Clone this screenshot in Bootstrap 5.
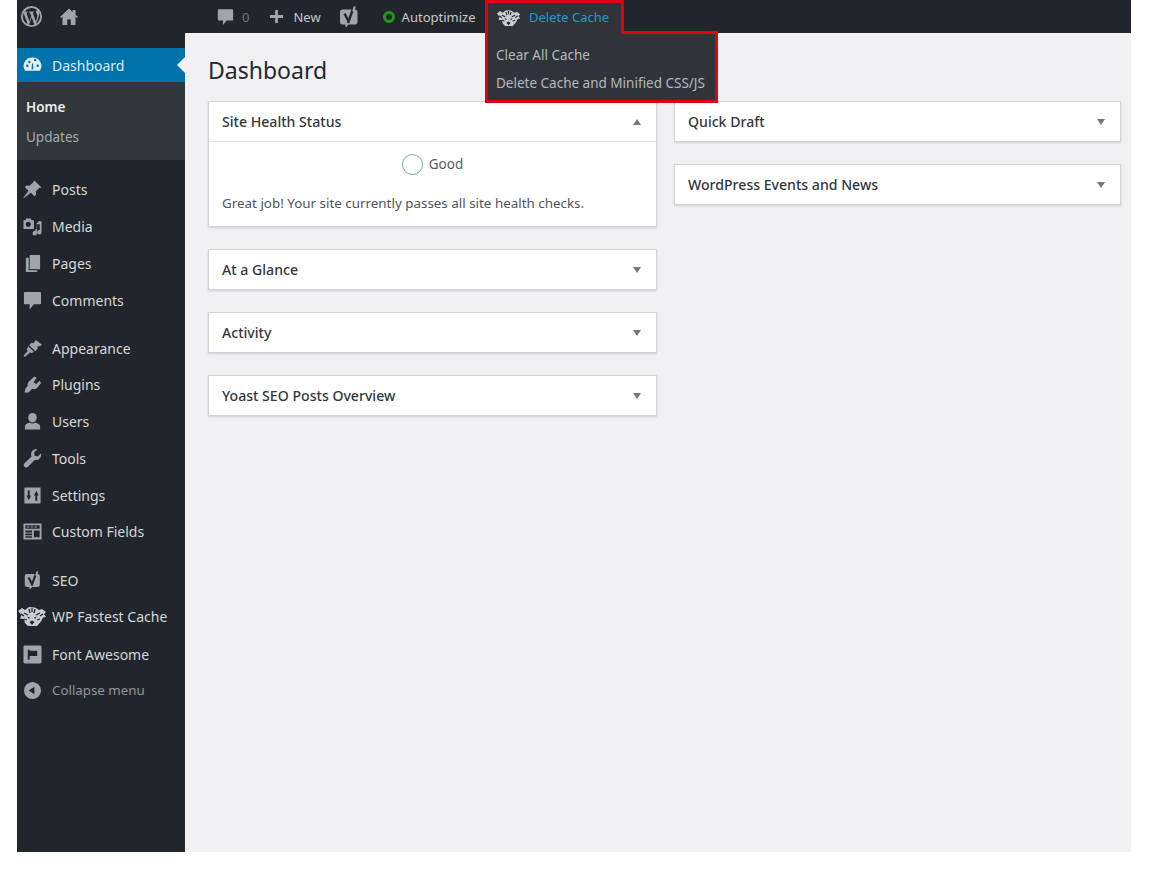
<!doctype html>
<html lang="en"><head><meta charset="utf-8"><title>Dashboard</title>
<link rel="stylesheet" href="https://cdn.jsdelivr.net/npm/bootstrap@5.3.0/dist/css/bootstrap.min.css">
<style>
html,body{background:#fff;margin:0;height:871px;overflow:hidden}
body{font-family:"Noto Sans","Open Sans",sans-serif;font-size:14px;color:#444}
.wpshell{width:1114px;height:852px;margin-left:17px;background:#f1f0f3;position:relative;flex-direction:column}
.topbar{height:33px;background:#22262c;color:#c6c8ca;flex:none}
.topbar svg{fill:#a0a5aa;display:block;flex:none}
.tb-logo{margin-left:3px}
.tb-home{margin-left:16px}
.tb-comment{margin-left:138px}
.tb-plus{margin-left:20px}
.tb-new{margin-left:9px}
.tb-yoast{margin-left:18px}
.tb-auto{margin-left:7px}
.tb-item{height:33px;font-size:13px;white-space:nowrap;padding-top:2px}
.tb-muted{color:#72777c}
.dotgreen{width:12px;height:12px;border-radius:50%;border:3px solid #1f9a18;display:block;margin-left:24px;margin-top:1px}
.cachemenu{position:absolute;left:468px;top:0;width:233px;height:103px;z-index:5;pointer-events:none}
.cachemenu>svg{position:absolute;inset:0}
.cache-title{position:absolute;left:11px;top:8px;height:20px;gap:8px;font-size:13px;color:#1d9cc6;white-space:nowrap}
.cache-links{position:absolute;left:11px;top:41px;font-size:13.5px;color:#b4b9be;line-height:28px;white-space:nowrap}
.sidebar{width:168px;background:#22262c;flex:none;padding-top:15px}
.mrow{height:37px;color:#d5d7d9;font-size:14px;padding-left:6px;gap:10px;white-space:nowrap}
.mrow>svg{width:19px;height:19px;fill:#a0a5aa;flex:none}
.mactive{height:34px;background:#0073aa;color:#dcecf4;position:relative}
.mactive>svg{fill:#e5edf2}
.mactive::after{content:"";position:absolute;right:0;top:9px;border:8px solid transparent;border-right-color:#f1f0f3;border-left-width:0}
.subm{background:#32373c;height:78px;padding:10px 9px 0;font-size:13.5px;line-height:30px;color:#a6aaae;margin-bottom:11px}
.subm b{color:#eceeef;font-weight:600;display:block;font-size:13.5px}
.sep{margin-top:11px}
.sep2{margin-top:12px}
.up1{margin-top:-1px}
.dn1{margin-top:1px}
.mrow>svg.tigerside{width:30px;height:22px;margin-left:-6px;margin-right:-5px}
.mcollapse{color:#92969a;font-size:13.3px}
.mainpane{padding:0 10px 0 23px;min-width:0}
.pagehead{font-family:"Noto Sans",sans-serif;font-size:23px;color:#23282d;line-height:30px;margin:22px 0 16px;font-weight:400}
.boxcols{gap:17px}
.colleft{width:449px;flex:none}
.colright{width:447px;flex:none}
.wpbox{background:#fff;border:1px solid #d3d4d8;box-shadow:0 1px 2px rgba(0,0,0,.14);margin-bottom:22px}
.wpbox-h{height:39px;padding:0 13px;font-size:14.1px;font-weight:500;color:#32373c}
.wpbox-h.opened{height:40px;border-bottom:1px solid #e2e4e7}
.tri{width:0;height:0;border-left:4px solid transparent;border-right:4px solid transparent;border-top:6px solid #72777c;margin-right:2px}
.tri.up{border-top:0;border-bottom:6px solid #72777c}
.healthbody{height:84px;padding:12px 13px 0}
.healthrow{gap:6px}
.healthring{width:21px;height:21px;border-radius:50%;border:1.5px solid #6fae8c;display:block}
.healthtext{color:#555d66;font-size:13.5px}
.healthnote{margin-top:18px;font-size:13.4px;color:#50555a;white-space:nowrap}
.tiger-top{width:25px;height:19px;flex:none}
</style></head><body>
<div class="wpshell d-flex">
 <svg width="0" height="0" class="position-absolute"><defs>
  <symbol id="yoast" viewBox="0 0 20 22"><path d="M3.500 3.500H16a2.500 2.500 0 0 1 2.500 2.500V16a2.500 2.500 0 0 1-2.500 2.500H9.500L7 21.500 6 18.500H3.500A2.500 2.500 0 0 1 1 16V6a2.500 2.500 0 0 1 2.500-2.500z"/><path d="M5.500 7.500 9.300 15M14 3 9 17" fill="none" stroke="#22262c" stroke-width="2.400"/><path d="M15.800 .3 14 5.500" fill="none" stroke="#a0a5aa" stroke-width="2"/></symbol>
  <symbol id="tigerface" viewBox="0 0 30 22"><path d="M1 5 5 2l3 2 4-3 6 .5 4 2.500 3-1 4 3-2 2 2 3-3 .5-2 4-4 4.500H11L8 17l-1-4-4-.5L4.500 9z" fill="#c9cbce"/><path d="M7 7 11 9M23 7 19 9M12 3l1 4M18 3l-1 4M15 2v4M4 8l3 2M26 8l-3 2M7 13l3 1M23 13l-3 1" stroke="#22262c" stroke-width="1.300" fill="none"/><path d="M10 10.500 13 11.500 12 13zM20 10.500 17 11.500 18 13zM12.500 16 15 14.500 17.500 16 15 19z" fill="#22262c"/></symbol>
 </defs></svg>
 <div class="topbar d-flex align-items-center">
  <svg class="tb-logo" width="23" height="23" viewBox="0 0 24 24"><path fill-rule="evenodd" d="M12 1a11 11 0 1 0 0 22 11 11 0 0 0 0-22zM3 12c0-1.300.3-2.500.8-3.600l4.200 11.700A9 9 0 0 1 3 12zm9 9c-.9 0-1.700-.1-2.500-.4l2.700-7.800 2.700 7.500A9 9 0 0 1 12 21zm1.200-13.200c.5 0 1-.1 1-.1.5-.1.400-.8-.1-.8 0 0-1.400.1-2.300.1-.9 0-2.300-.1-2.300-.1-.5 0-.6.800-.1.800l.9.1 1.400 3.700-1.900 5.700-3.200-9.400c.5 0 1-.1 1-.1.5-.1.400-.8-.1-.8 0 0-1.400.1-2.300.1h-.5A9 9 0 0 1 18.100 5.400h-.1c-.9 0-1.500.8-1.500 1.600 0 .7.4 1.300.9 2.100.3.600.7 1.300.7 2.400 0 .7-.3 1.600-.7 2.800l-.9 3zm3.300 12a9 9 0 0 0 3.400-12.100c.1.400.1.800.1 1.300 0 1.300-.2 2.700-.9 4.500z"/></svg>
  <svg class="tb-home" width="20" height="20" viewBox="0 0 20 20"><path d="M10 1.500 1 10l1 1 1.500-1.300V18H8.200v-5.500h3.600V18h4.700V9.700L18 11l1-1-2.500-2.300V3h-2.800v2z"/></svg>
  <svg class="tb-comment" width="17" height="18" viewBox="0 0 20 20"><path d="M2 1h16a1 1 0 0 1 1 1v11a1 1 0 0 1-1 1h-6.500L7 19.500V14H2a1 1 0 0 1-1-1V2a1 1 0 0 1 1-1z"/></svg>
  <span class="tb-item d-flex align-items-center tb-muted ms-2">0</span>
  <svg class="tb-plus" width="15" height="15" viewBox="0 0 16 16"><path d="M6.500 1h3v5.500H15v3H9.500V15h-3V9.500H1v-3h5.500z"/></svg>
  <span class="tb-item tb-new d-flex align-items-center">New</span>
  <svg class="tb-yoast" width="20" height="22"><use href="#yoast"/></svg>
  <span class="dotgreen"></span>
  <span class="tb-item tb-auto d-flex align-items-center">Autoptimize</span>
 </div>
 <div class="d-flex flex-grow-1">
  <nav class="sidebar">
   <div class="mrow mactive d-flex align-items-center"><svg viewBox="0 0 20 20"><path fill-rule="evenodd" d="M10 1.500a9 9 0 0 0-7.800 14h15.600A9 9 0 0 0 10 1.500zM4.500 11.500a1.300 1.300 0 1 1 0-2.600 1.300 1.300 0 0 1 0 2.600zm2.200-4a1.300 1.300 0 1 1 0-2.600 1.300 1.300 0 0 1 0 2.600zM11 14H9l.5-6h1zm1.800-8.500a1.300 1.300 0 1 1 0-2.600 1.300 1.300 0 0 1 0 2.600zm2.700 6a1.300 1.300 0 1 1 0-2.600 1.300 1.300 0 0 1 0 2.600z"/></svg>Dashboard</div>
   <div class="subm"><b>Home</b>Updates</div>
   <div class="mrow d-flex align-items-center"><svg viewBox="0 0 20 20"><path d="M12 .5 19.500 8l-2.500.5-3.500 3.500.3 3.500-1.800 1.500-3.700-3.700L1 19l-.5-.5 5.300-7.300L2 7.500l1.500-1.800L7 6l3.500-3.500z"/></svg>Posts</div>
   <div class="mrow d-flex align-items-center"><svg viewBox="0 0 20 20"><path fill-rule="evenodd" d="M3 1.500h5l1 2h2.500v9H.5v-9H3zm2.500 3.500a2.700 2.700 0 1 0 0 5.400 2.700 2.700 0 0 0 0-5.400z"/><path d="M19.500 4.500V16a2.300 2.300 0 1 1-1.800-2.200V7.500h-3V17a2.300 2.300 0 1 1-1.800-2.200v-2h1.500V6h1.500V4.500z"/></svg>Media</div>
   <div class="mrow d-flex align-items-center"><svg viewBox="0 0 20 20"><path d="M7 1h11v15H7z"/><path d="M3 4h3v13h9v2H3z"/></svg>Pages</div>
   <div class="mrow d-flex align-items-center"><svg viewBox="0 0 20 20"><path d="M2 1h16a1 1 0 0 1 1 1v11a1 1 0 0 1-1 1h-6.500L7 19.500V14H2a1 1 0 0 1-1-1V2a1 1 0 0 1 1-1z"/></svg>Comments</div>
   <div class="mrow sep d-flex align-items-center"><svg viewBox="0 0 20 20"><path d="M13.500 1 20 6l-2 1.500-3 .5.500 2L13 13 6.500 6.500 9 4l2 .5zM5.500 7.500l6 6-2.500 1.500-1.500-1L2 19 .5 17.500 5 12.500l-1-1.500z"/></svg>Appearance</div>
   <div class="mrow up1 d-flex align-items-center"><svg viewBox="0 0 20 20"><path d="M12 1.500l2.500 1.500L11 7.500l3 2 3.500-3.500 1.500 2.500-3.500 4.500c-1.500 2-4 2.500-6 1.500L6 18.500H1.500l1.500-5 2-2c-.5-2 0-3.500 1.500-5z"/></svg>Plugins</div>
   <div class="mrow d-flex align-items-center"><svg viewBox="0 0 20 20"><ellipse cx="10" cy="6" rx="4.500" ry="5"/><path d="M2 18.500v-3.500c0-2 2.500-3 5-4 1.500 1.500 4.500 1.500 6 0 2.500 1 5 2 5 4v3.500z"/></svg>Users</div>
   <div class="mrow d-flex align-items-center"><svg viewBox="0 0 20 20"><path d="M19 4.500l-3.500 3.500-3-1-1-3L15 .5c-3.500-.8-6.500 1.800-6.500 5 0 1 .2 1.700.5 2.300L1.500 15a2.700 2.700 0 0 0 3.800 3.800l7-7.300c3.800 1 7.500-2.500 6.700-7z"/></svg>Tools</div>
   <div class="mrow d-flex align-items-center"><svg viewBox="0 0 20 20"><path fill-rule="evenodd" d="M1.500 1.500h17v17h-17zM5 4.500V10H3.500L6 15l2.500-5H7V4.500zm8 11h2V10h1.500L14 5l-2.500 5H13z"/></svg>Settings</div>
   <div class="mrow up1 d-flex align-items-center"><svg viewBox="0 0 20 20"><path fill-rule="evenodd" d="M.5 1.500h19v17H.5zm2 2v3.500h15V3.500zm0 5.500v2h7V9zm9 0v7h6V9zM2.500 12v2h7v-2zm0 3v1.500h7V15z"/><path d="M4 4.700h2.500v1H4zm4 0h2.500v1H8zm4 0h2.500v1H12z"/></svg>Custom Fields</div>
   <div class="mrow sep2 d-flex align-items-center"><svg><use href="#yoast"/></svg>SEO</div>
   <div class="mrow up1 d-flex align-items-center"><svg class="tigerside"><use href="#tigerface"/></svg>WP Fastest Cache</div>
   <div class="mrow dn1 d-flex align-items-center"><svg viewBox="0 0 20 20"><path fill-rule="evenodd" d="M2 .5h16A1.500 1.500 0 0 1 19.500 2v16a1.500 1.500 0 0 1-1.500 1.500H2A1.500 1.500 0 0 1 .5 18V2A1.500 1.500 0 0 1 2 .5zM5 5v10.500h2V11.500h8V6H7V5z"/></svg>Font Awesome</div>
   <div class="mrow up1 mcollapse d-flex align-items-center"><svg viewBox="0 0 20 20"><path fill-rule="evenodd" d="M10 1a9 9 0 1 0 0 18 9 9 0 0 0 0-18zm2 5v8L6 10z"/></svg>Collapse menu</div>
  </nav>
  <main class="mainpane flex-grow-1">
   <h1 class="pagehead">Dashboard</h1>
   <div class="d-flex boxcols">
    <div class="colleft">
     <section class="wpbox">
      <div class="wpbox-h opened d-flex align-items-center justify-content-between">Site Health Status<span class="tri up"></span></div>
      <div class="healthbody">
       <div class="healthrow d-flex justify-content-center align-items-center"><span class="healthring"></span><span class="healthtext">Good</span></div>
       <p class="healthnote mb-0">Great job! Your site currently passes all site health checks.</p>
      </div>
     </section>
     <section class="wpbox"><div class="wpbox-h d-flex align-items-center justify-content-between">At a Glance<span class="tri"></span></div></section>
     <section class="wpbox"><div class="wpbox-h d-flex align-items-center justify-content-between">Activity<span class="tri"></span></div></section>
     <section class="wpbox"><div class="wpbox-h d-flex align-items-center justify-content-between">Yoast SEO Posts Overview<span class="tri"></span></div></section>
    </div>
    <div class="colright">
     <section class="wpbox"><div class="wpbox-h d-flex align-items-center justify-content-between">Quick Draft<span class="tri"></span></div></section>
     <section class="wpbox"><div class="wpbox-h d-flex align-items-center justify-content-between">WordPress Events and News<span class="tri"></span></div></section>
    </div>
   </div>
  </main>
 </div>
 <div class="cachemenu">
  <svg width="233" height="103" viewBox="0 0 233 103"><path d="M1.500 1.500H137.500V32.500H231.500V101.500H1.500Z" fill="#30343a" stroke="#e0000f" stroke-width="3"/></svg>
  <div class="cache-title d-flex align-items-center"><svg class="tiger-top"><use href="#tigerface"/></svg>Delete Cache</div>
  <div class="cache-links">Clear All Cache<br>Delete Cache and Minified CSS/JS</div>
 </div>
</div>
<script src="https://cdn.jsdelivr.net/npm/bootstrap@5.3.0/dist/js/bootstrap.bundle.min.js"></script>
</body></html>
